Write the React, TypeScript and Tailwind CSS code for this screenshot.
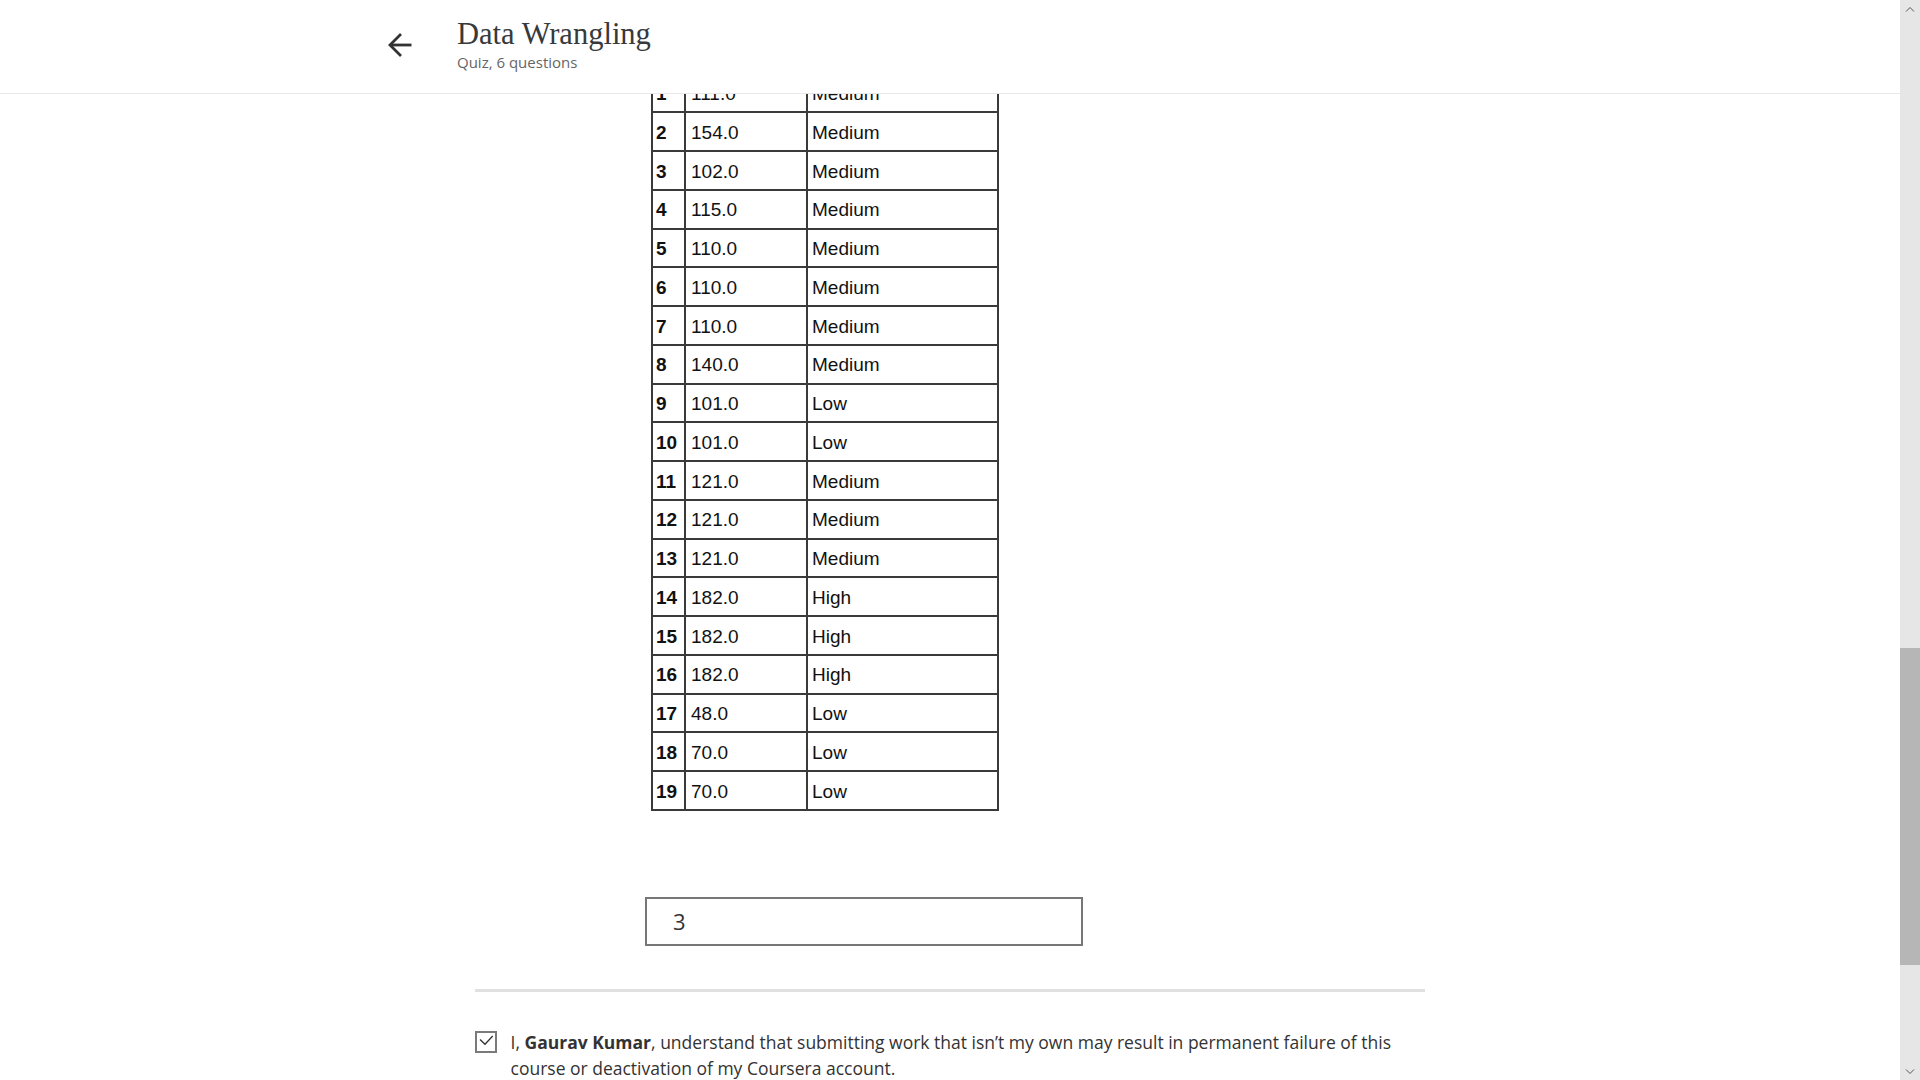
const rows: [string, string, string][] = [
  ['1', '111.0', 'Medium'],
  ['2', '154.0', 'Medium'],
  ['3', '102.0', 'Medium'],
  ['4', '115.0', 'Medium'],
  ['5', '110.0', 'Medium'],
  ['6', '110.0', 'Medium'],
  ['7', '110.0', 'Medium'],
  ['8', '140.0', 'Medium'],
  ['9', '101.0', 'Low'],
  ['10', '101.0', 'Low'],
  ['11', '121.0', 'Medium'],
  ['12', '121.0', 'Medium'],
  ['13', '121.0', 'Medium'],
  ['14', '182.0', 'High'],
  ['15', '182.0', 'High'],
  ['16', '182.0', 'High'],
  ['17', '48.0', 'Low'],
  ['18', '70.0', 'Low'],
  ['19', '70.0', 'Low'],
];

function QuizHeader() {
  return (
    <header className="absolute inset-x-0 top-0 z-10 h-[94px] border-b border-[#e8e8e8] bg-white">
      <div className="mx-auto flex w-[1126px] items-start pt-[17px]">
        <button className="mt-[15px] text-[#333]" aria-label="Back">
          <svg width="26" height="26" viewBox="0 0 26 26" fill="none" stroke="currentColor" strokeWidth="2.8">
            <path d="M24.5 13H3.5" />
            <path d="M14 2 3 13l11 11" />
          </svg>
        </button>
        <div className="ml-[44px]">
          <h1 className="font-['Liberation_Serif',serif] text-[30.5px] leading-[34px] text-[#373a3c]">Data Wrangling</h1>
          <p className="mt-[1px] text-[15px] leading-[20px] text-[#666]">Quiz, 6 questions</p>
        </div>
      </div>
    </header>
  );
}

function DataTable() {
  return (
    <div className="w-[348px] border-x-2 border-t-2 border-[#3a3a3a] font-['Liberation_Sans',Arial,sans-serif] text-[19px] text-[#111]">
      {rows.map(([idx, value, level]) => (
        <div key={idx} className="grid h-[38.76px] grid-cols-[33px_122px_1fr] border-b-2 border-[#3a3a3a]">
          <div className="flex items-center border-r-2 border-[#3a3a3a] pl-[3px] pt-[3px] font-bold">{idx}</div>
          <div className="flex items-center border-r-2 border-[#3a3a3a] pl-[5px] pt-[3px]">{value}</div>
          <div className="flex items-center pl-[4px] pt-[3px]">{level}</div>
        </div>
      ))}
    </div>
  );
}

function ScrollBar() {
  return (
    <div className="flex h-full w-[20px] shrink-0 flex-col items-center bg-[#e6e6e6]">
      <div className="flex h-[17px] items-center justify-center">
        <svg width="10" height="6" viewBox="0 0 10 6" fill="none" stroke="#555" strokeWidth="1">
          <path d="M1 5.5 5 1.5l4 4" />
        </svg>
      </div>
      <div className="mt-[631px] h-[317px] w-full bg-[#b6b6b6]" />
      <div className="flex-1" />
      <div className="flex h-[17px] items-center justify-center">
        <svg width="10" height="6" viewBox="0 0 10 6" fill="none" stroke="#555" strokeWidth="1">
          <path d="M1 0.5 5 4.5l4-4" />
        </svg>
      </div>
    </div>
  );
}

export default function App() {
  return (
    <div className="flex h-[1080px] w-[1920px] overflow-hidden bg-white font-['Open_Sans',sans-serif]">
      <div className="relative flex-1 overflow-hidden">
        <QuizHeader />
        <main className="mx-auto w-[950px] pt-[72.5px]">
          <div className="pl-[176px]">
            <DataTable />
          </div>

          <div className="mt-[86.5px] pl-[170px]">
            <div className="flex h-[49px] w-[438px] items-center border-2 border-[#777] pl-[26px] text-[22px] text-[#333]">
              3
            </div>
          </div>

          <div className="mt-[42.5px] h-[3px] bg-[#e0e0e0]" />

          <label className="mt-[37px] flex items-start">
            <span className="mt-[2px] flex h-[22px] w-[22px] shrink-0 items-center justify-center border-2 border-[#7a7a7a] bg-white">
              <svg width="18" height="18" viewBox="0 0 18 18" fill="none" stroke="#333" strokeWidth="1.3">
                <path d="M3 6.5 8 11.3 15.7 3" />
              </svg>
            </span>
            <span className="ml-[13.5px] text-[17.5px] leading-[26.5px] text-[#333]">
              I, <b className="font-bold">Gaurav Kumar</b>, understand that submitting work that isn’t my own may result in permanent
              failure of this course or deactivation of my Coursera account.
            </span>
          </label>
        </main>
      </div>
      <ScrollBar />
    </div>
  );
}
